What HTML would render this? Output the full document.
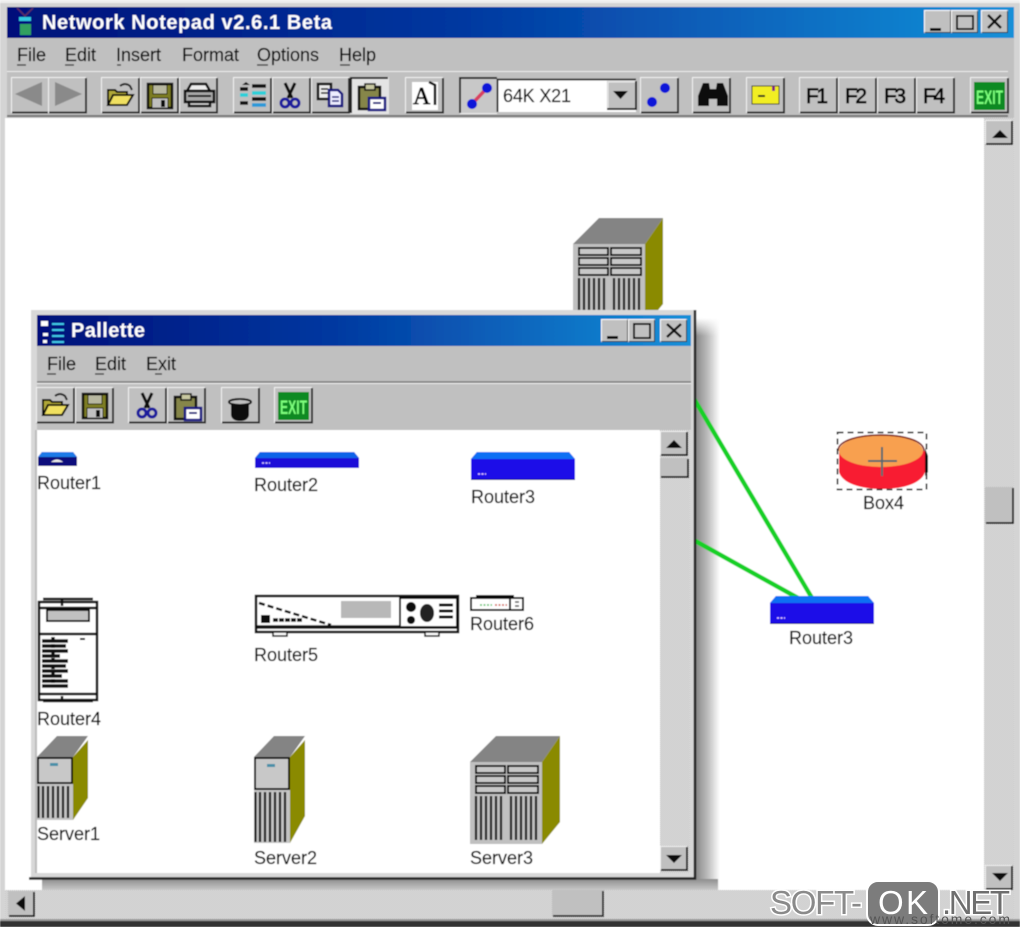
<!DOCTYPE html>
<html><head><meta charset="utf-8"><title>Network Notepad</title>
<style>
html,body{margin:0;padding:0;background:#fff}
svg{display:block}
text{font-family:"Liberation Sans",sans-serif;fill:#000;stroke:#000;stroke-width:.15px}
</style></head><body>
<svg width="1020" height="927" viewBox="0 0 1020 927" xmlns="http://www.w3.org/2000/svg">
<defs>
<linearGradient id="tg" x1="0" x2="1" y1="0" y2="0"><stop offset="0" stop-color="#00107a"/><stop offset=".45" stop-color="#0338a0"/><stop offset="1" stop-color="#1490d8"/></linearGradient>
<linearGradient id="shR" x1="0" x2="1" y1="0" y2="0"><stop offset="0" stop-color="#8a8a8a"/><stop offset=".45" stop-color="#b8b8b8"/><stop offset="1" stop-color="#fff"/></linearGradient>
<linearGradient id="shT" x1="0" x2="0" y1="0" y2="1"><stop offset="0" stop-color="#fff"/><stop offset="1" stop-color="#fff" stop-opacity="0"/></linearGradient>
<linearGradient id="shB" x1="0" x2="0" y1="0" y2="1"><stop offset="0" stop-color="#8e8e8e"/><stop offset="1" stop-color="#c8c8c8"/></linearGradient>
<pattern id="dith" width="2" height="2" patternUnits="userSpaceOnUse"><rect width="2" height="2" fill="#ececec"/><rect width="1" height="1" fill="#b4b4b4"/><rect x="1" y="1" width="1" height="1" fill="#b4b4b4"/></pattern>
<filter id="soft" x="0" y="0" width="100%" height="100%"><feGaussianBlur stdDeviation="0.4"/></filter>
<g id="b"><rect width="39" height="37" fill="#c0c0c0"/><path d="M0.5 36V.5H38" fill="none" stroke="#f2f2f2"/><path d="M1 35.5H38V1" fill="none" stroke="#2a2a2a" stroke-width="2"/></g>
<g id="bs"><rect width="28" height="25" fill="#c0c0c0"/><path d="M.5 24V.5H27" fill="none" stroke="#efefef"/><path d="M1 24H27V1" fill="none" stroke="#222" stroke-width="2"/></g>
<g id="wb"><rect width="27" height="23" fill="#c0c0c0"/><path d="M.5 22V.5H26" fill="none" stroke="#fff"/><path d="M1 22.5H26.5V1" fill="none" stroke="#333"/></g>
<g id="open"><path d="M5 27V12h7l2 2h10v3" fill="#b0a838" stroke="#111" stroke-width="2"/><path d="M5 27l5-10h20l-6 10z" fill="#f0e060" stroke="#111" stroke-width="2"/><path d="M17 8q5-4 10 0l2 4" fill="none" stroke="#222" stroke-width="2"/></g>
<g id="save"><rect x="4" y="5" width="24" height="24" fill="#7d7d20" stroke="#111" stroke-width="2.500"/><rect x="9" y="6" width="14" height="9" fill="#b8b8a0" stroke="#111"/><rect x="8" y="19" width="16" height="10" fill="#c0c0c0" stroke="#111"/><rect x="17" y="21" width="4" height="7" fill="#111"/></g>
<g id="cut"><path d="M12 4l7 15M22 4l-7 15" stroke="#111" stroke-width="3" fill="none"/><circle cx="12" cy="24" r="4" fill="none" stroke="#1a1a9c" stroke-width="3"/><circle cx="22" cy="24" r="4" fill="none" stroke="#1a1a9c" stroke-width="3"/></g>
<g id="paste"><rect x="4" y="6" width="21" height="22" fill="#86864a" stroke="#111" stroke-width="2.500"/><rect x="10" y="3" width="10" height="6" fill="#c8c8a0" stroke="#111" stroke-width="1.500"/><path d="M14 17h16v12H14z" fill="#fff" stroke="#141480" stroke-width="2.500"/><path d="M18 21h8v2h-8z" fill="#141480"/></g>
<g id="exit"><rect x="3" y="4" width="31" height="28" fill="#0a8a22"/><text x="5" y="26" font-size="19" font-weight="bold" textLength="27" lengthAdjust="spacingAndGlyphs" style="fill:#7dff7d;stroke:none">EXIT</text></g>
<g id="srv3"><path d="M0 26L26 0H90L72 26z" fill="#848484"/><path d="M72 26L90 0V86L72 108z" fill="#8a8a00"/><rect y="26" width="72" height="82" fill="#c0c0c0"/>
<g fill="#c8c8c8" stroke="#111" stroke-width="2"><rect x="6" y="30" width="29" height="7"/><rect x="38" y="30" width="30" height="7"/><rect x="6" y="40" width="29" height="7"/><rect x="38" y="40" width="30" height="7"/><rect x="6" y="50" width="29" height="7"/><rect x="38" y="50" width="30" height="7"/></g>
<path d="M6 60V104M11 60V104M16 60V104M21 60V104M26 60V104M31 60V104M41 60V104M46 60V104M51 60V104M56 60V104M61 60V104M66 60V104" stroke="#111" stroke-width="2.200"/></g>
<g id="rt3"><path d="M6 0H98L104 7V28H0V7z" fill="#1c10e8"/><path d="M6 0H98L104 7H0z" fill="#0c70f4"/><path d="M7 22h8" stroke="#e8c8ff" stroke-width="1.500" stroke-dasharray="2 1.500"/><path d="M0 27.500H104" stroke="#0a0a80"/></g>
</defs>
<g filter="url(#soft)">
<!-- main window -->
<rect width="1020" height="927" fill="#d4d4d4"/>
<rect x="0" y="0" width="1020" height="3" fill="#eee"/>
<rect x="7" y="7" width="1007" height="31" fill="url(#tg)"/>
<rect x="19" y="17" width="12" height="4" fill="#30c8e0"/><path d="M17 8l8 8 8-8" stroke="#603060" stroke-width="1.500" fill="none"/><rect x="20" y="24" width="11" height="11" fill="#30a060"/>
<text x="42" y="29" font-size="20" font-weight="bold" textLength="290" lengthAdjust="spacing" style="fill:#fff;stroke:none">Network Notepad v2.6.1 Beta</text>
<use href="#wb" x="924" y="10"/><use href="#wb" x="951" y="10"/><use href="#wb" x="981" y="10"/>
<rect x="930" y="28" width="11" height="3" fill="#111"/><rect x="957" y="16" width="16" height="13" fill="none" stroke="#111" stroke-width="2"/><path d="M988 15l13 13M1001 15l-13 13" stroke="#111" stroke-width="2.500"/>
<rect x="7" y="38" width="1007" height="80" fill="#c0c0c0"/>
<path d="M7 71.500H1008" stroke="#eee"/><path d="M7 116H1008" stroke="#777" stroke-width="2"/>
<g font-size="18">
<text x="17" y="61">File</text><text x="65" y="61">Edit</text><text x="116" y="61">Insert</text><text x="182" y="61">Format</text><text x="257" y="61">Options</text><text x="339" y="61">Help</text>
</g>
<path d="M17 65h9M65 65h9M117 65h4M257 65h11M340 65h10" stroke="#222" stroke-width="1.300"/>

<!-- toolbar buttons -->
<use href="#b" x="11" y="77"/><use href="#b" x="48" y="77"/>
<path d="M42 82v24L15 94z" fill="#8a8a8a"/><path d="M55 82v24l27-12z" fill="#8a8a8a"/>
<use href="#b" x="101" y="77"/><use href="#open" x="103" y="78"/>
<use href="#b" x="140" y="77"/><use href="#save" x="144" y="79"/>
<use href="#b" x="179" y="77"/>
<g transform="translate(179,77)"><path d="M12 7h15l4 7H8z" fill="#eee" stroke="#111" stroke-width="2.500"/><path d="M6 14h29v11H6z" fill="#a8a8a8" stroke="#111" stroke-width="2.500"/><path d="M9 19h23" stroke="#111" stroke-width="2"/><path d="M10 25h21v4H10z" fill="#ddd" stroke="#111" stroke-width="2.500"/></g>
<use href="#b" x="233" y="77"/>
<g transform="translate(233,77)" stroke-width="3.500"><path d="M9 8l4-3 4 3z" fill="#111" stroke="none"/><path d="M7 12h8" stroke="#111"/><path d="M19 9h14" stroke="#111"/><path d="M7 18h8M19 16h14" stroke="#2ad0d8"/><path d="M19 22h14" stroke="#111"/><path d="M7 26h8" stroke="#111"/><path d="M19 28h14" stroke="#2a9ad8"/></g>
<use href="#b" x="272" y="77"/><use href="#cut" x="273" y="79"/>
<use href="#b" x="311" y="77"/>
<g transform="translate(311,77)"><path d="M7 7h13v15H7z" fill="#eee" stroke="#111" stroke-width="2.500"/><path d="M10 12h7M10 16h7" stroke="#111" stroke-width="1.500"/><path d="M18 13h9l4 4v12H18z" fill="#eef" stroke="#14147c" stroke-width="2.500"/><path d="M21 20h7M21 24h7" stroke="#14147c" stroke-width="1.500"/></g>
<rect x="350" y="77" width="39" height="37" fill="#e4e4e4"/><path d="M351 113V78H388" fill="none" stroke="#222" stroke-width="2"/><use href="#paste" x="355" y="81"/>
<use href="#b" x="405" y="77"/>
<g transform="translate(405,77)"><rect x="7" y="5" width="26" height="28" fill="#fff"/><text x="8" y="27" font-size="24" style="font-family:'Liberation Serif',serif;fill:#000;stroke:#000;stroke-width:.7px">A</text><path d="M24 5l6 3v20" stroke="#111" stroke-width="2.500" fill="none"/></g>
<rect x="459" y="77" width="38" height="37" fill="#c8c8c8"/><path d="M460 113V78H497" fill="none" stroke="#222" stroke-width="2"/><path d="M497 113.500H460" stroke="#eee"/>
<path d="M471 105L487 88" stroke="#d84060" stroke-width="3.500"/><circle cx="472" cy="104" r="5" fill="#0c14d8"/><circle cx="487" cy="88" r="5" fill="#0c14d8"/>
<!-- combo -->
<rect x="497" y="79" width="139" height="33" fill="#fff"/><path d="M497.500 112V79.500H636" fill="none" stroke="#333" stroke-width="2"/>
<text x="503" y="102" font-size="18" textLength="68" lengthAdjust="spacing">64K X21</text>
<rect x="607" y="81" width="29" height="28" fill="#c0c0c0"/><path d="M608 109V82H635" fill="none" stroke="#eee"/><path d="M607 109H636V81" fill="none" stroke="#222" stroke-width="2"/><path d="M613 91h15l-7.500 8z" fill="#111"/>
<use href="#b" x="640" y="77"/><circle cx="652" cy="102" r="5" fill="#0c14d8"/><circle cx="665" cy="88" r="5" fill="#0c14d8"/>
<use href="#b" x="692" y="77"/>
<path d="M698 106V96l5-13h6l1 6h6l1-6h6l5 13v10h-11v-7h-8v7z" fill="#0a0a0a"/>
<use href="#b" x="746" y="77"/><rect x="752" y="86" width="27" height="18" fill="#f2ee20" stroke="#222"/><path d="M758 96h7" stroke="#222" stroke-width="2"/><rect x="772" y="86" width="3" height="5" fill="#802080"/>
<use href="#b" x="799" y="77"/><use href="#b" x="838" y="77"/><use href="#b" x="877" y="77"/><use href="#b" x="916" y="77"/>
<g font-size="21"><text x="806" y="103" textLength="22" style="stroke-width:.7px">F1</text><text x="845" y="103" textLength="22" style="stroke-width:.7px">F2</text><text x="884" y="103" textLength="22" style="stroke-width:.7px">F3</text><text x="923" y="103" textLength="22" style="stroke-width:.7px">F4</text></g>
<use href="#b" x="970" y="77"/><use href="#exit" x="971" y="78"/>

<!-- canvas -->
<rect x="5" y="118" width="979" height="772" fill="#fff"/>
<use href="#srv3" x="573" y="218"/>
<!-- palette shadow -->
<rect x="696" y="318" width="24" height="572" fill="url(#shR)"/>
<rect x="696" y="318" width="24" height="18" fill="url(#shT)"/>
<rect x="42" y="879" width="676" height="11" fill="url(#shB)"/>
<path d="M690 392L812 598M690 538L798 598" stroke="#12d028" stroke-width="4.500"/>
<use href="#rt3" x="770" y="596"/>
<text x="789" y="644" font-size="18">Router3</text>
<!-- box4 -->
<path d="M839 451V472C842 483 860 489 882 489S922 483 925 472V451z" fill="#f81c30"/>
<path d="M925 448l3 8v16l-3 4z" fill="#111"/>
<ellipse cx="881" cy="451" rx="42" ry="16" fill="#f8a050"/>
<path d="M838 451C838 440 860 435 881 435S924 440 924 451" fill="none" stroke="#7a1010" stroke-width="1.500"/>
<rect x="837.500" y="432.500" width="89" height="57" fill="none" stroke="#111" stroke-width="1.500" stroke-dasharray="6 4"/>
<path d="M868 461h29M882 447v29" stroke="#556a70" stroke-width="2"/>
<text x="863" y="509" font-size="18">Box4</text>

<!-- main scrollbars -->
<rect x="984" y="118" width="30" height="772" fill="url(#dith)"/>
<use href="#bs" x="985" y="120"/><path d="M992 138h16l-8-8z" fill="#111"/>
<rect x="985" y="487" width="29" height="37" fill="#c0c0c0"/><path d="M986 523H1013V488" fill="none" stroke="#222" stroke-width="2"/>
<use href="#bs" x="985" y="865"/><path d="M992 873h16l-8 8z" fill="#111"/>
<rect x="5" y="890" width="1009" height="29" fill="url(#dith)"/>
<rect x="8" y="891" width="27" height="26" fill="#c0c0c0"/><path d="M9 916H34V892" fill="none" stroke="#222" stroke-width="2"/><path d="M25 896v15l-9-7.500z" fill="#111"/>
<rect x="552" y="890" width="52" height="27" fill="#c0c0c0"/><path d="M553 916H603V891" fill="none" stroke="#333" stroke-width="2"/>
<rect x="0" y="921" width="1020" height="6" fill="#333"/><rect x="0" y="919" width="1020" height="2" fill="#999"/>

<!-- palette window -->
<rect x="31" y="310" width="665" height="569" fill="#d8d8d8"/>
<path d="M695 310V878.500H29" fill="none" stroke="#222" stroke-width="2.500"/>
<rect x="37" y="315" width="654" height="31" fill="url(#tg)"/>
<rect x="41" y="321" width="7" height="5" fill="#fff"/><rect x="43" y="333" width="5" height="3" fill="#fff"/><rect x="43" y="340" width="4" height="3" fill="#fff"/><path d="M52 324h12M52 330h12M52 336h12M52 342h12" stroke="#40c8e8" stroke-width="2"/>
<text x="71" y="337" font-size="20" font-weight="bold" textLength="74" style="fill:#fff;stroke:none">Pallette</text>
<use href="#wb" x="601" y="319"/><use href="#wb" x="628" y="319"/><use href="#wb" x="660" y="319"/>
<rect x="607" y="336" width="11" height="3" fill="#111"/><rect x="634" y="324" width="16" height="14" fill="none" stroke="#111" stroke-width="2"/><path d="M667 324l14 13M681 324l-14 13" stroke="#111" stroke-width="2.500"/>
<rect x="37" y="346" width="654" height="84" fill="#c0c0c0"/>
<path d="M37 382H691" stroke="#777" stroke-width="1.500"/><path d="M37 383.500H691" stroke="#eee"/>
<g font-size="18"><text x="47" y="370">File</text><text x="95" y="370">Edit</text><text x="146" y="370">Exit</text></g>
<path d="M47 374h9M95 374h9M155 374h7" stroke="#222" stroke-width="1.300"/>
<use href="#b" x="36" y="387"/><use href="#open" x="38" y="388"/>
<use href="#b" x="75" y="387"/><use href="#save" x="79" y="389"/>
<use href="#b" x="128" y="387"/><use href="#cut" x="130" y="389"/>
<use href="#b" x="167" y="387"/><use href="#paste" x="171" y="391"/>
<use href="#b" x="221" y="387"/><path d="M231 404v10c0 5 4 7 9 7s9-2 9-7v-10z" fill="#0a0a0a"/><ellipse cx="240" cy="402" rx="11" ry="3" fill="none" stroke="#111" stroke-width="2"/>
<use href="#b" x="274" y="387"/><use href="#exit" x="275" y="388"/>
<rect x="36" y="430" width="625" height="443" fill="#fff"/>
<path d="M36 430V873" stroke="#bbb" stroke-width="2"/>

<!-- palette items -->
<g transform="translate(38,452)"><path d="M4 0H35L39 5V14H0V5z" fill="#10107c"/><path d="M4 0H35L39 5H0z" fill="#1a7ae8"/><path d="M13 10q6-5 12 0z" fill="#eee"/></g>
<text x="37" y="489" font-size="18">Router1</text>
<g transform="translate(255,452)"><path d="M5 0H99L104 6V16H0V6z" fill="#1c10d8"/><path d="M5 0H99L104 6H0z" fill="#0c64e8"/><path d="M7 11h8" stroke="#d8c8ff" stroke-width="1.500" stroke-dasharray="2 1.500"/></g>
<text x="254" y="491" font-size="18">Router2</text>
<use href="#rt3" x="471" y="452"/>
<text x="471" y="503" font-size="18">Router3</text>
<!-- router4 -->
<g transform="translate(38,597)" fill="none" stroke="#0a0a0a" stroke-width="2.500"><path d="M1 5H59V103H1zM1 11H59M1 97H59M24 1V9M24 99V105M5 2H55M5 104H55"/><rect x="9" y="13" width="42" height="11" fill="#c0c0c0" stroke-width="2"/><path d="M1 37H59"/><g stroke-width="3.500"><path d="M4 44H30M4 49H28M4 54H30M4 59H22M4 64H30M4 69H28M4 74H30M4 79H24M4 84H30M4 89H30"/><path d="M15 40V88" stroke-dasharray="4 3"/></g><path d="M42 42h5" stroke-width="2"/></g>
<text x="37" y="725" font-size="18">Router4</text>
<!-- router5 -->
<g transform="translate(255,595)"><rect x="1" y="1" width="202" height="36" fill="#fff" stroke="#0a0a0a" stroke-width="2.500"/><path d="M2 32H202" stroke="#0a0a0a" stroke-width="3.500"/><rect x="86" y="6" width="50" height="17" fill="#b8b8b8"/><path d="M4 8L76 30" stroke="#111" stroke-width="2.500" stroke-dasharray="6 3"/><rect x="6" y="20" width="9" height="8" fill="#111"/><path d="M18 25h30" stroke="#111" stroke-width="3.500" stroke-dasharray="5 1"/><rect x="145" y="3" width="57" height="29" fill="#fff" stroke="#111" stroke-width="2"/><circle cx="156" cy="12" r="5" fill="#111"/><circle cx="156" cy="25" r="4" fill="#111"/><ellipse cx="172" cy="18" rx="7" ry="9" fill="#222"/><path d="M184 10h14M184 16h14M184 22h14" stroke="#111" stroke-width="3"/><path d="M18 37h14v4H18zM170 37h14v4h-14z" fill="#fff" stroke="#111" stroke-width="1.500"/></g>
<text x="254" y="661" font-size="18">Router5</text>
<!-- router6 -->
<g transform="translate(470,593)"><path d="M1 5H53V17H1z" fill="#fff" stroke="#111" stroke-width="2"/><path d="M6 2H44V5H6z" fill="#111"/><path d="M40 5V17" stroke="#111" stroke-width="2"/><path d="M10 12h12" stroke="#50c060" stroke-width="1.500" stroke-dasharray="2 1.500"/><path d="M25 12h12" stroke="#d05040" stroke-width="1.500" stroke-dasharray="2 1.500"/><path d="M45 9h4M45 13h4" stroke="#555" stroke-width="1.500"/></g>
<text x="470" y="630" font-size="18">Router6</text>
<!-- server1 -->
<g transform="translate(37,736)"><path d="M0 21L20 0H51L36 21z" fill="#848484"/><path d="M36 21L51 4V62L36 84z" fill="#8a8a00"/><rect y="21" width="36" height="63" fill="#c4c4c4"/><rect x="1" y="22" width="34" height="25" fill="#c8c8c8" stroke="#111" stroke-width="2"/><rect x="13" y="27" width="8" height="3" fill="#4a90a8"/><path d="M1.500 50V82M6 50V82M11 50V82M16 50V82M21 50V82M26 50V82M31 50V82" stroke="#111" stroke-width="2.200"/></g>
<text x="37" y="840" font-size="18">Server1</text>
<!-- server2 -->
<g transform="translate(254,736)"><path d="M0 21L20 0H51L36 21z" fill="#848484"/><path d="M36 21L51 4V80L36 107z" fill="#8a8a00"/><rect y="21" width="36" height="86" fill="#c4c4c4"/><rect x="1" y="22" width="34" height="31" fill="#c8c8c8" stroke="#111" stroke-width="2"/><rect x="13" y="28" width="8" height="3" fill="#4a90a8"/><path d="M1.500 56V106M6 56V106M11 56V106M16 56V106M21 56V106M26 56V106M31 56V106" stroke="#111" stroke-width="2.200"/></g>
<text x="254" y="864" font-size="18">Server2</text>
<use href="#srv3" x="470" y="736"/>
<text x="470" y="864" font-size="18">Server3</text>

<!-- palette scrollbar -->
<rect x="660" y="430" width="30" height="443" fill="url(#dith)"/>
<use href="#bs" x="660" y="431"/><path d="M666 448h16l-8-8z" fill="#111"/>
<rect x="660" y="458" width="29" height="20" fill="#c0c0c0"/><path d="M661 477H688V459" fill="none" stroke="#222" stroke-width="2"/>
<use href="#bs" x="660" y="846"/><path d="M666 855h16l-8 8z" fill="#111"/>
</g>

<!-- watermark -->
<rect x="867" y="881" width="72" height="44" rx="11" fill="#7c7c7c" stroke="#fff" stroke-width="2"/>
<text x="870" y="924" font-size="14" textLength="140" style="fill:#555;stroke:none">www.softome.com</text>
<g font-size="33">
<text x="770" y="914" textLength="92" style="fill:#8a8a8a;stroke:#fff;stroke-width:3px;paint-order:stroke">SOFT-</text>
<text x="878" y="914" textLength="50" style="fill:#fff;stroke:none">OK</text>
<text x="942" y="914" textLength="68" style="fill:#6e6e6e;stroke:#fff;stroke-width:3px;paint-order:stroke">.NET</text>
</g>
</svg>
</body></html>
